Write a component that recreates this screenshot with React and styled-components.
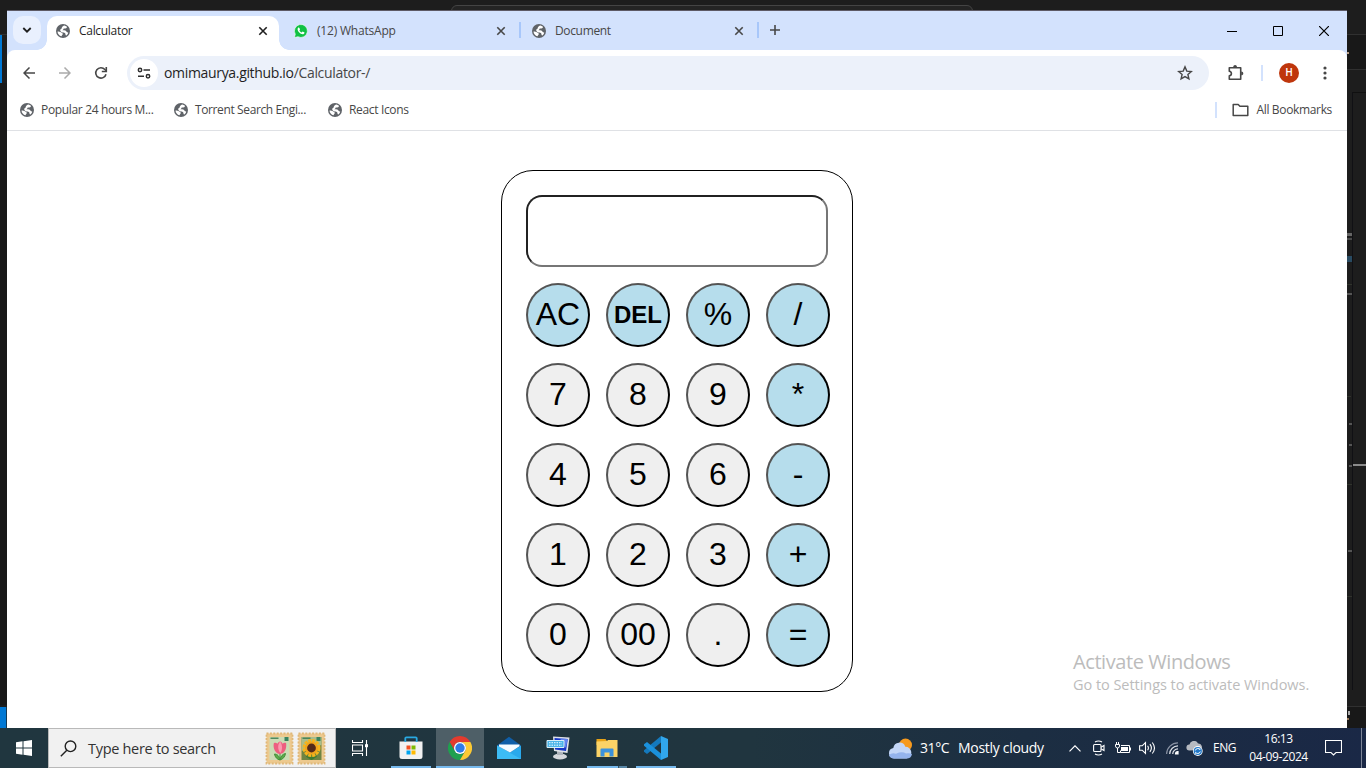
import React from "react";
import styled, { createGlobalStyle, css } from "styled-components";

const GlobalStyle = createGlobalStyle`
  *, *::before, *::after { box-sizing: border-box; }
  html, body { margin: 0; padding: 0; overflow: hidden; background: #1c1c1c; }
  svg { display: block; flex: none; }
`;

const Desktop = styled.div`
  position: relative;
  display: flex;
  flex-direction: column;
  width: 1366px;
  height: 768px;
  overflow: hidden;
  background: #1d1d1d;
  font-family: "Open Sans", "Noto Sans", sans-serif;
  color: #1f1f1f;
`;

/* Editor window peeking out from behind the browser */
const Backdrop = styled.div`
  position: absolute;
  inset: 0;
`;

const Fragment = styled.div`
  position: absolute;
  left: ${(p) => p.$x}px;
  top: ${(p) => p.$y}px;
  width: ${(p) => p.$w}px;
  height: ${(p) => p.$h}px;
  background: ${(p) => p.$c};
`;

const CommandCenter = styled.div`
  position: absolute;
  left: 451px;
  top: 5px;
  width: 522px;
  height: 22px;
  border: 1px solid #444;
  border-radius: 6px;
  background: #242424;
`;

const BrowserWindow = styled.main`
  position: relative;
  display: flex;
  flex-direction: column;
  width: 1340px;
  height: 717px;
  margin: 11px 0 0 7px;
  background: #fff;
`;

const Label = styled.span`
  font-size: ${(p) => p.$size || 12}px;
  letter-spacing: ${(p) => p.$ls || 0}px;
  line-height: 1.3;
  white-space: nowrap;
  color: ${(p) => p.$c || "inherit"};
`;

const TabStrip = styled.header`
  display: flex;
  align-items: flex-start;
  height: 39px;
  padding: 5px 0 0 6px;
  background: #d3e2fd;
  box-shadow: 0 -1px 0 #5d5a66;
`;

const TabSearch = styled.div`
  display: grid;
  place-items: center;
  width: 28px;
  height: 28px;
  margin-right: 6px;
  border-radius: 10px;
  background: #e9f0fe;
`;

const Tab = styled.div`
  position: relative;
  display: flex;
  align-items: center;
  width: 232px;
  height: 34px;
  padding: 0 11px 5px 9px;
  color: #474747;

  ${(p) =>
    p.$active &&
    css`
      color: #1f1f1f;
      background: #fff;
      border-radius: 10px 10px 0 0;
      &::before,
      &::after {
        content: "";
        position: absolute;
        bottom: 0;
        width: 10px;
        height: 10px;
      }
      &::before {
        left: -10px;
        background: radial-gradient(circle at 0 0, transparent 9.5px, #fff 10px);
      }
      &::after {
        right: -10px;
        background: radial-gradient(circle at 100% 0, transparent 9.5px, #fff 10px);
      }
    `}
`;

const TabTitle = styled(Label)`
  flex: 1;
  margin-left: 9px;
`;

const TabGap = styled.div`
  display: flex;
  justify-content: center;
  align-items: center;
  width: 6px;
  height: 28px;
  &::before {
    content: "";
    width: 2px;
    height: 16px;
    background: ${(p) => (p.$line ? "#a8c7fa" : "transparent")};
  }
`;

const NewTab = styled.div`
  display: grid;
  place-items: center;
  width: 28px;
  height: 28px;
`;

const WindowControls = styled.div`
  display: flex;
  margin-left: auto;
`;

const WindowControl = styled.div`
  display: grid;
  place-items: center;
  width: 46px;
  height: 29px;
`;

const ToolbarFrame = styled.div`
  background: #d3e2fd;
`;

const Toolbar = styled.div`
  display: flex;
  align-items: center;
  height: 46px;
  padding: 0 4px;
  background: #fff;
  border-radius: 8px 8px 0 0;
`;

const NavButton = styled.div`
  display: grid;
  place-items: center;
  width: 36px;
  height: 36px;
`;

const AddressBar = styled.div`
  display: flex;
  align-items: center;
  width: 1082px;
  height: 34px;
  margin: 0 9px 0 8px;
  padding: 0 16px 0 3px;
  border-radius: 17px;
  background: #ecf1fa;
`;

const SiteInfo = styled.div`
  display: grid;
  place-items: center;
  width: 28px;
  height: 28px;
  margin-right: 6px;
  border-radius: 50%;
  background: #fff;
`;

const Url = styled(Label)`
  flex: 1;
  & > span { color: #474747; }
`;

const Separator = styled.div`
  width: 2px;
  height: 16px;
  background: #d3e2fd;
`;

const ToolbarSeparator = styled(Separator)`
  margin-left: 7px;
`;

const Avatar = styled.div`
  display: grid;
  place-items: center;
  width: 20px;
  height: 20px;
  margin: 0 8px 0 16px;
  border-radius: 50%;
  background: #bf360c;
  color: #fff;
  font: 500 10px/1 Roboto, sans-serif;
`;

const BookmarkBar = styled.nav`
  display: flex;
  align-items: center;
  height: 35px;
  padding: 0 15px 6px 13px;
  border-bottom: 1px solid #dfe1e5;
  color: #474747;
`;

const Bookmark = styled.div`
  display: flex;
  align-items: center;
  gap: 7px;
  width: ${(p) => p.$w}px;
`;

const AllBookmarks = styled.div`
  display: flex;
  align-items: center;
  gap: 7px;
  margin-left: auto;
  & > ${Separator} { margin-right: 8px; }
`;

const Page = styled.section`
  position: relative;
  flex: 1;
  display: flex;
  justify-content: center;
  align-items: flex-start;
  padding-top: 39px;
  background: #fff;
`;

const CalculatorBody = styled.div`
  width: 352px;
  height: 522px;
  padding: 24px;
  border: 1px solid #000;
  border-radius: 32px;
`;

const Display = styled.input`
  display: block;
  width: 302px;
  height: 72px;
  margin-bottom: 16px;
  padding: 1px 2px;
  border: 2px inset #767676;
  border-radius: 16px;
  background: #fff;
  font: 32px "Liberation Sans", Arial, sans-serif;
`;

const Keypad = styled.div`
  display: grid;
  grid-template-columns: repeat(4, 64px);
  grid-auto-rows: 64px;
  gap: 16px;
`;

const Key = styled.button`
  padding: 0 0 ${(p) => (p.$bold ? 0 : 2)}px;
  border: 2px outset #000;
  border-radius: 50%;
  background: ${(p) => (p.$accent ? "#b6ddec" : "#efefef")};
  color: #000;
  font-family: "Liberation Sans", Arial, sans-serif;
  font-size: ${(p) => (p.$bold ? 24 : 32)}px;
  font-weight: ${(p) => (p.$bold ? 700 : 400)};
  white-space: nowrap;
`;

const Watermark = styled.aside`
  position: absolute;
  left: 1066px;
  top: 518px;
  display: flex;
  flex-direction: column;
  gap: 1px;
  color: #bcbcbc;
`;

const Taskbar = styled.footer`
  position: relative;
  display: flex;
  height: 40px;
  background: linear-gradient(90deg, #20363f 0%, #20353f 55%, #1c2e42 75%, #1a2846 100%);
  color: #fff;
`;

const TaskCell = styled.div`
  position: relative;
  display: grid;
  place-items: center;
  flex: none;
  width: ${(p) => p.$w || 48}px;
  height: 40px;
  margin-right: ${(p) => p.$gap || 0}px;
  background: ${(p) => (p.$active ? "#4e5f67" : "transparent")};
  &::after {
    content: "";
    position: absolute;
    bottom: 0;
    left: ${(p) => (p.$active ? 0 : 4)}px;
    right: ${(p) => (p.$active ? 0 : 4)}px;
    height: 2px;
    background: ${(p) =>
      p.$stacked
        ? "linear-gradient(90deg, #76b9ed 31px, #35505f 31px, #35505f 32px, #5786a6 32px)"
        : p.$open
        ? "#76b9ed"
        : "transparent"};
  }
`;

const SearchBox = styled.div`
  display: flex;
  align-items: center;
  width: 288px;
  height: 40px;
  padding: 0 9px 0 11px;
  border: 1px solid #b9b9b9;
  background: #f1f1f1;
  color: #333;
`;

const SearchText = styled(Label)`
  flex: 1;
  margin-left: 11px;
  padding-top: 2px;
`;

const Stamps = styled.div`
  display: flex;
  gap: 3px;
`;

const Tray = styled.div`
  display: flex;
  align-items: center;
  margin-left: auto;
`;

const Weather = styled.div`
  display: flex;
  align-items: center;
  width: 175px;
`;

const Temperature = styled(Label)`
  width: 38px;
  margin-left: 7px;
`;

const Language = styled(TaskCell)`
  padding-left: 3px;
`;

const Clock = styled.div`
  display: flex;
  flex-direction: column;
  align-items: center;
  width: 73px;
`;

const ClockLine = styled(Label)`
  line-height: 18px;
`;

const ShowDesktop = styled.div`
  width: 5px;
  height: 40px;
  margin-left: 10px;
  border-left: 1px solid #7d8597;
`;

const Globe = () => (
  <svg width="14" height="14" viewBox="0 0 14 14">
    <circle cx="7" cy="7" r="7" fill="#5f6368" />
    <path d="M8.600 1.500 11 2.700C10.900 4.400 9.300 4.700 7.700 4.600 7.600 5.500 7 5.900 6.300 6.300c1.300.2 2.700-.1 3.500.5.8.6.4 1.500 2.400 1.700-.2 1.300-.9 2.400-1.900 3.100-1-.4-.7-1.400-1-2.200-.5-.8-1.500-.3-2.500-.8C5.400 8 4.500 7.700 4.300 6.800 4 5.700 4.600 5.100 5.500 4.700c.3-1.900 1.500-2.900 3.100-3.200z" fill="#fff" />
    <path d="M1.500 7.400c1.300.1 2.700.2 3.500.9.700.7 1.900.8 1.800 1.800-.1.800-1 .8-1.200 2.200C3.300 11.700 1.600 9.800 1.500 7.400z" fill="#fff" />
  </svg>
);

const WhatsApp = () => (
  <svg width="14" height="14" viewBox="0 0 14 14">
    <path d="M.4 13.600 1.300 10.200A6.500 6.500 0 1 1 3.900 12.700z" fill="#10c143" stroke="#fff" strokeWidth=".6" />
    <path d="M4.800 3.500c-.6 0-1.200.7-1.200 1.700 0 2 2.900 5 5 5 1.100 0 1.900-.7 1.900-1.500 0-.4-1.500-1.200-1.900-1.200-.3 0-.7.900-1 .9-.5 0-2-1.300-2.200-2 0-.3.600-.6.600-1S5.200 3.500 4.800 3.500z" fill="#fff" />
  </svg>
);

const CloseIcon = ({ color = "#474747" }) => (
  <svg width="10" height="10" viewBox="0 0 10 10">
    <path d="m1.300 1.300 7.400 7.400m0-7.400L1.300 8.700" stroke={color} strokeWidth="1.600" />
  </svg>
);

const ExtensionIcon = () => (
  <svg width="18" height="18" viewBox="0 0 18 18" fill="none">
    <path d="M2.300 3.700h11.400v11.600H2.300v-3.400c2.800-.4 2.800-4.300 0-4.700z" stroke="#474747" strokeWidth="1.600" strokeLinejoin="round" />
    <path d="M6.200 3.200c0-2.800 3.800-2.800 3.800 0zM14.200 7.400c2.800 0 2.800 3.900 0 3.900z" fill="#474747" />
  </svg>
);

const StoreIcon = () => (
  <svg width="24" height="24" viewBox="0 0 24 24">
    <path d="M.5 5.500h23v15A2.500 2.500 0 0 1 21 23H3A2.500 2.500 0 0 1 .5 20.500z" fill="#f1f1f1" />
    <path d="M6.300 6V2.300q0-1 1-1h9.400q1 0 1 1V6" fill="none" stroke="#29a9e1" strokeWidth="1.800" />
    <path d="M7.500 9.500h4v4h-4z" fill="#f25022" />
    <path d="M12.500 9.500h4v4h-4z" fill="#7fba00" />
    <path d="M7.500 14.500h4v4h-4z" fill="#00a4ef" />
    <path d="M12.500 14.500h4v4h-4z" fill="#ffb900" />
  </svg>
);

const ChromeIcon = () => (
  <svg width="24" height="24" viewBox="0 0 48 48">
    <path d="M24 0a24 24 0 0 1 20.800 12H24a12 12 0 0 0-10.400 18L3.200 12A24 24 0 0 1 24 0z" fill="#e33b2e" />
    <path d="M3.200 12 13.600 30A12 12 0 0 0 34.400 30L24 48A24 24 0 0 1 3.200 12z" fill="#1fa04f" />
    <path d="M44.800 12A24 24 0 0 1 24 48l10.400-18A12 12 0 0 0 24 12z" fill="#fcc934" />
    <circle cx="24" cy="24" r="12" fill="#fff" />
    <circle cx="24" cy="24" r="9.400" fill="#2f7be8" />
  </svg>
);

const MailIcon = () => (
  <svg width="26" height="24" viewBox="0 0 26 24">
    <path d="M1 9.500 13 .8l12 8.700L13 18z" fill="#0f5ea8" />
    <path d="M1 9.500V23h24V9.500L14 16.500z" fill="#2aa9ec" />
    <path d="M1 9.500V23h24z" fill="#3dbcf5" />
    <path d="M3 8.500h20.500v1.800L14 16.500 3 10.500z" fill="#f5fbff" />
  </svg>
);

const RemoteIcon = () => (
  <svg width="24" height="24" viewBox="0 0 24 24">
    <ellipse cx="14" cy="20.500" rx="7" ry="3" fill="#d6d8dc" />
    <path d="M11 14h6v5h-6z" fill="#aeb3ba" />
    <path d="M7 .5 23.500 1.500 21.500 17 8 15z" fill="#dfe2e8" />
    <path d="M8.500 2 21.800 3 20 15 9 13.500z" fill="#1637c6" />
    <path d="m14 2.500 7.800.5-2 9z" fill="#5f83ef" />
    <path d="M1 4.500h17v7H1z" fill="#4bb4e8" stroke="#d9eef8" />
    <path d="M3 6.700h13M3 9.200h13" stroke="#f2fbff" strokeDasharray="1.500 1" />
  </svg>
);

const ExplorerIcon = () => (
  <svg width="22" height="20" viewBox="0 0 22 20">
    <path d="M.5 1h9l1.500 2v4H.5z" fill="#e8a317" />
    <path d="M.5 3.500 11 3l1-1h9.500v17H.5z" fill="#fbd367" />
    <path d="M4.500 18.500v-7q0-1 1-1h11q1 0 1 1v7h-4v-4h-5v4z" fill="#3c92dc" />
  </svg>
);

const CodeIcon = () => (
  <svg width="26" height="26" viewBox="0 0 26 26">
    <path d="M18 1v6.500L4 19 1 16.800v-1.600z" fill="#1479bd" />
    <path d="M18 25v-6.500L4 7 1 9.200v1.600z" fill="#1b91dc" />
    <path d="M18 1 25 4v18l-7 3z" fill="#31a7ed" />
  </svg>
);

const Stamp = ({ kind }) => (
  <svg width="29" height="33" viewBox="0 0 29 33">
    <rect x="1.500" y="1.500" width="26" height="30" fill="#edc98e" stroke="#e0b878" strokeWidth="1.800" strokeDasharray="2 1.400" />
    <rect x="4.500" y="5" width="20" height="23" fill={kind === "tulip" ? "#cbdcb5" : "#6f8442"} />
    {kind === "sunflower" && <path d="M4.500 5h20v8l-20 6z" fill="#a9bd8c" />}
    <path d="M5.500 6.200h8" stroke="#3c7b50" strokeWidth="1.300" />
    <path d="M19.500 5h4v4h-4z" fill="#39845f" />
    {kind === "tulip" ? (
      <g>
        <path d="M15 19v9c-.5-4-3-6-5.500-6 .5 3 2.500 5.500 5.500 6 3-1 5-3 5.500-6.500-2.500.5-5 2.500-5.500 6.500" stroke="#43903c" fill="#5baa48" />
        <path d="M8.800 11.200c1.500-.8 2.800-.4 3.500.6.700-1.200 1.700-2 2.900-2.300 1 .4 1.900 1.200 2.400 2.200.9-.8 2.100-1.200 3.500-.7.800 5.800-1.500 10.500-6 11C10.300 21.500 7.800 16.500 8.800 11.200z" fill="#ed5f80" />
        <path d="M15.200 9.500c2.300 3.500 2.500 8 .2 11.500-2.900-3.500-3-8-.2-11.500z" fill="#fb9aae" />
      </g>
    ) : (
      <g>
        <path d="M14.500 22v6M14.500 27l-5-3M14.500 27l5-3" stroke="#3f7b31" strokeWidth="2" />
        <circle cx="14.500" cy="16" r="7" fill="none" stroke="#f5b41c" strokeWidth="4" strokeDasharray="2.900 .8" />
        <circle cx="14.500" cy="16" r="6.500" fill="#f2a51c" />
        <circle cx="14.500" cy="16" r="4.400" fill="#532a19" />
      </g>
    )}
  </svg>
);

const WeatherIcon = () => (
  <svg width="25" height="21" viewBox="0 0 25 21">
    <circle cx="17.500" cy="7" r="6.500" fill="#f79a1e" />
    <path d="M6 20.500a5.300 5.300 0 0 1-.7-10.500 6.200 6.200 0 0 1 12-1.200A5.900 5.900 0 0 1 18.500 20.500z" fill="#c3d6f7" />
    <path d="M1 17q3-2.500 7-1.200Q14 13 18 15.500q3-.7 6 .5-.8 4.500-5.500 4.500H6Q2 20.300 1 17z" fill="#94b3ec" />
  </svg>
);

const keys = [
  "AC", "DEL", "%", "/",
  "7", "8", "9", "*",
  "4", "5", "6", "-",
  "1", "2", "3", "+",
  "0", "00", ".", "=",
];
const accents = ["AC", "DEL", "%", "/", "*", "-", "+", "="];

const fragments = [
  [0, 35, 2, 48, "#0078d4"],
  [0, 34, 7, 1, "#303030"],
  [0, 83, 7, 622, "#181818"],
  [0, 707, 7, 21, "#0078d4"],
  [6, 707, 1, 21, "#123955"],
  [1347, 34, 19, 1, "#303030"],
  [1347, 35, 19, 34, "#181818"],
  [1347, 52, 2, 2, "#b79b82"],
  [1347, 69, 19, 1, "#303030"],
  [1352, 92, 14, 1, "#101010"],
  [1352, 92, 1, 598, "#101014"],
  [1347, 233, 5, 3, "#666"],
  [1347, 238, 5, 2, "#4a4a4a"],
  [1347, 256, 5, 6, "#294b62"],
  [1347, 284, 5, 1, "#30332c"],
  [1347, 293, 5, 2, "#555"],
  [1347, 396, 4, 1, "#30332c"],
  [1349, 423, 3, 2, "#555"],
  [1349, 444, 3, 2, "#555"],
  [1349, 465, 3, 2, "#555"],
  [1353, 464, 13, 2, "#8a8a8a"],
  [1347, 484, 5, 1, "#30332c"],
  [1348, 550, 4, 2, "#555"],
  [1347, 596, 5, 1, "#30332c"],
  [1347, 706, 19, 1, "#303030"],
  [1347, 707, 19, 21, "#181818"],
  [1348, 711, 2, 4, "#aaa"],
  [1347, 718, 2, 2, "#987858"],
];

export default function App() {
  return (
    <>
      <GlobalStyle />
      <Desktop>
        <Backdrop>
          <CommandCenter />
          {fragments.map(([x, y, w, h, c], i) => (
            <Fragment key={i} $x={x} $y={y} $w={w} $h={h} $c={c} />
          ))}
        </Backdrop>

        <BrowserWindow>
          <TabStrip>
            <TabSearch>
              <svg width="10" height="8" viewBox="0 0 10 8">
                <path d="m1.300 2 3.700 3.700L8.700 2" fill="none" stroke="#1f1f1f" strokeWidth="1.800" />
              </svg>
            </TabSearch>
            <Tab $active>
              <Globe />
              <TabTitle $ls={-0.3}>Calculator</TabTitle>
              <CloseIcon color="#1f1f1f" />
            </Tab>
            <TabGap />
            <Tab>
              <WhatsApp />
              <TabTitle $ls={-0.2}>(12) WhatsApp</TabTitle>
              <CloseIcon />
            </Tab>
            <TabGap $line />
            <Tab>
              <Globe />
              <TabTitle $ls={-0.35}>Document</TabTitle>
              <CloseIcon />
            </Tab>
            <TabGap $line />
            <NewTab>
              <svg width="12" height="12" viewBox="0 0 12 12">
                <path d="M6 1v10M1 6h10" stroke="#474747" strokeWidth="1.600" />
              </svg>
            </NewTab>
            <WindowControls>
              <WindowControl>
                <svg width="10" height="10" viewBox="0 0 10 10"><path d="M0 5.500h10" stroke="#000" /></svg>
              </WindowControl>
              <WindowControl>
                <svg width="10" height="10" viewBox="0 0 10 10"><path d="M.5.500h9v9h-9z" fill="none" stroke="#000" /></svg>
              </WindowControl>
              <WindowControl>
                <svg width="10" height="10" viewBox="0 0 10 10"><path d="m0 0 10 10m0-10L0 10" stroke="#000" strokeWidth="1.200" /></svg>
              </WindowControl>
            </WindowControls>
          </TabStrip>

          <ToolbarFrame>
            <Toolbar>
              <NavButton>
                <svg width="12" height="12" viewBox="0 0 12 12" fill="none" stroke="#474747" strokeWidth="1.500"><path d="M12 6H1M6.500.5 1 6l5.500 5.500" /></svg>
              </NavButton>
              <NavButton>
                <svg width="12" height="12" viewBox="0 0 12 12" fill="none" stroke="#ababab" strokeWidth="1.500"><path d="M0 6h11M5.500.5 11 6l-5.500 5.500" /></svg>
              </NavButton>
              <NavButton>
                <svg width="14" height="14" viewBox="0 0 14 14" fill="none" stroke="#474747" strokeWidth="1.600"><path d="M12 8.200A5.200 5.200 0 1 1 10.900 3.500L12.400 5" /><path d="M12.300 1v4.500H7.800" /></svg>
              </NavButton>
              <AddressBar>
                <SiteInfo>
                  <svg width="14" height="12" viewBox="0 0 14 12" fill="none" stroke="#303030" strokeWidth="1.500"><circle cx="3" cy="3" r="1.700" /><path d="M6.500 3H13M1 9.200h6" /><circle cx="11" cy="9.200" r="1.700" /></svg>
                </SiteInfo>
                <Url $size={14} $ls={-0.33}>omimaurya.github.io<span>/Calculator-/</span></Url>
                <svg width="16" height="16" viewBox="0 0 16 16" fill="none" stroke="#474747" strokeWidth="1.400"><path d="m8 1.900 1.800 4.200 4.500.4-3.400 3 1 4.400L8 11.600l-3.900 2.300 1-4.400-3.400-3 4.500-.4z" /></svg>
              </AddressBar>
              <NavButton><ExtensionIcon /></NavButton>
              <ToolbarSeparator />
              <Avatar>H</Avatar>
              <NavButton>
                <svg width="4" height="14" viewBox="0 0 4 14" fill="#474747"><circle cx="2" cy="2" r="1.600" /><circle cx="2" cy="7" r="1.600" /><circle cx="2" cy="12" r="1.600" /></svg>
              </NavButton>
            </Toolbar>
          </ToolbarFrame>

          <BookmarkBar>
            <Bookmark $w={154}><Globe /><Label $ls={-0.34}>Popular 24 hours M...</Label></Bookmark>
            <Bookmark $w={154}><Globe /><Label $ls={-0.38}>Torrent Search Engi...</Label></Bookmark>
            <Bookmark $w={120}><Globe /><Label $ls={-0.34}>React Icons</Label></Bookmark>
            <AllBookmarks>
              <Separator />
              <svg width="17" height="14" viewBox="0 0 17 14" fill="none" stroke="#474747" strokeWidth="1.500"><path d="M1.200 1.500h5l1.700 1.700h7.900v9.300H1.200z" strokeLinejoin="round" /></svg>
              <Label $ls={-0.34}>All Bookmarks</Label>
            </AllBookmarks>
          </BookmarkBar>

          <Page>
            <CalculatorBody>
              <Display readOnly aria-label="Result" />
              <Keypad>
                {keys.map((k) => (
                  <Key key={k} $accent={accents.includes(k)} $bold={k === "DEL"}>{k}</Key>
                ))}
              </Keypad>
            </CalculatorBody>
            <Watermark>
              <Label $size={20} $ls={-0.42}>Activate Windows</Label>
              <Label $size={14.5} $ls={-0.04}>Go to Settings to activate Windows.</Label>
            </Watermark>
          </Page>
        </BrowserWindow>

        <Taskbar>
          <TaskCell>
            <svg width="16" height="16" viewBox="0 0 16 16" fill="#fff"><path d="M0 2.200 6.500 1.300v6.200H0zM7.500 1.200 16 0v7.500H7.500zM0 8.500h6.500v6.200L0 13.800zM7.500 8.500H16V16l-8.500-1.200z" /></svg>
          </TaskCell>
          <SearchBox>
            <svg width="17" height="17" viewBox="0 0 17 17" fill="none" stroke="#222" strokeWidth="1.400"><circle cx="10.500" cy="6.300" r="5.300" /><path d="M6.800 10.200.8 16.200" /></svg>
            <SearchText $size={14.5} $ls={-0.3}>Type here to search</SearchText>
            <Stamps>
              <Stamp kind="tulip" />
              <Stamp kind="sunflower" />
            </Stamps>
          </SearchBox>
          <TaskCell $gap={3}>
            <svg width="17" height="16" viewBox="0 0 17 16" fill="none" stroke="#fff" strokeWidth="1.100"><path d="M.5 0v2.500h10V0M.5 5h10v6H.5zM.5 16v-2.500h10V16M14.500 0v16" /><path d="M13 4.200h3v3h-3z" fill="#fff" stroke="none" /></svg>
          </TaskCell>
          <TaskCell $gap={1} $open><StoreIcon /></TaskCell>
          <TaskCell $gap={1} $open $active><ChromeIcon /></TaskCell>
          <TaskCell $gap={1}><MailIcon /></TaskCell>
          <TaskCell $gap={1}><RemoteIcon /></TaskCell>
          <TaskCell $gap={1} $open $stacked><ExplorerIcon /></TaskCell>
          <TaskCell $open><CodeIcon /></TaskCell>
          <Tray>
            <Weather>
              <WeatherIcon />
              <Temperature $size={14} $ls={-0.4}>31°C</Temperature>
              <Label $size={14} $ls={-0.3}>Mostly cloudy</Label>
            </Weather>
            <TaskCell $w={24}>
              <svg width="12" height="7" viewBox="0 0 12 7"><path d="m.5 6.300L6 .8l5.500 5.500" fill="none" stroke="#fff" strokeWidth="1.200" /></svg>
            </TaskCell>
            <TaskCell $w={24}>
              <svg width="12" height="16" viewBox="0 0 12 16" fill="none" stroke="#fff" strokeWidth="1.100"><rect x=".6" y="4.500" width="7.400" height="7" rx="1" /><path d="M8 7.200 11 5.500v5L8 8.800M2 2q3.500-2 7 0M2 14q3.500 2 7 0" /></svg>
            </TaskCell>
            <TaskCell $w={24}>
              <svg width="16" height="13" viewBox="0 0 16 13" fill="none" stroke="#fff"><path d="M6 3.500h8.500v7h-9v-2M15.500 5.500v3M1.500 0v2.500M3.500 0v2.500M.5 2.500h4v1.500q0 2-2 2t-2-2zM2.500 6v4.500h3" /><path d="M6 5h7v4H6z" fill="#fff" stroke="none" /></svg>
            </TaskCell>
            <TaskCell $w={24}>
              <svg width="17" height="14" viewBox="0 0 17 14" fill="none" stroke="#fff" strokeWidth="1.100"><path d="M.6 4.800h2.600L6.500 1.500v11L3.200 9.200H.6zM8.600 4.800q1.600 2.200 0 4.400M10.900 3.200q3 3.800 0 7.600M13.300 1.500q4.400 5.500 0 11" /></svg>
            </TaskCell>
            <TaskCell $w={26}>
              <svg width="13" height="13" viewBox="0 0 13 13" fill="none" strokeWidth="1.200"><path d="M.6 12A11.400 11.400 0 0 1 12 .8" stroke="#8992a3" /><path d="M3.700 12A8.300 8.300 0 0 1 12 3.900M6.700 12A5.300 5.300 0 0 1 12 6.900" stroke="#dfe3e9" /><path d="M9.500 12A2.500 2.500 0 0 1 12 9.500V12z" fill="#fff" stroke="#fff" /></svg>
            </TaskCell>
            <TaskCell $w={19}>
              <svg width="17" height="15" viewBox="0 0 17 15"><path d="M3.300 9.500a3 3 0 0 1 .2-6 4.500 4.500 0 0 1 8.500-1 3.400 3.400 0 0 1 1.800 6.500z" fill="#b6bac1" /><circle cx="11.800" cy="10" r="4.900" fill="#fff" /><circle cx="11.800" cy="10" r="4.100" fill="#2077c8" /><path d="M9.300 9.500q.5-2 2.500-2 1.500 0 2.200 1.200V7.300M14.300 10.500q-.5 2-2.500 2-1.500 0-2.200-1.200v1.400" fill="none" stroke="#fff" /></svg>
            </TaskCell>
            <Language $w={38}><Label $ls={-0.5}>ENG</Label></Language>
            <Clock>
              <ClockLine $ls={-0.45}>16:13</ClockLine>
              <ClockLine $ls={-0.4}>04-09-2024</ClockLine>
            </Clock>
            <TaskCell $w={36}>
              <svg width="17" height="16" viewBox="0 0 17 16"><path d="M.5.500h16v12h-5.500L8.500 15 6 12.500H.5z" fill="none" stroke="#fff" strokeWidth="1.100" /></svg>
            </TaskCell>
            <ShowDesktop />
          </Tray>
        </Taskbar>
      </Desktop>
    </>
  );
}
